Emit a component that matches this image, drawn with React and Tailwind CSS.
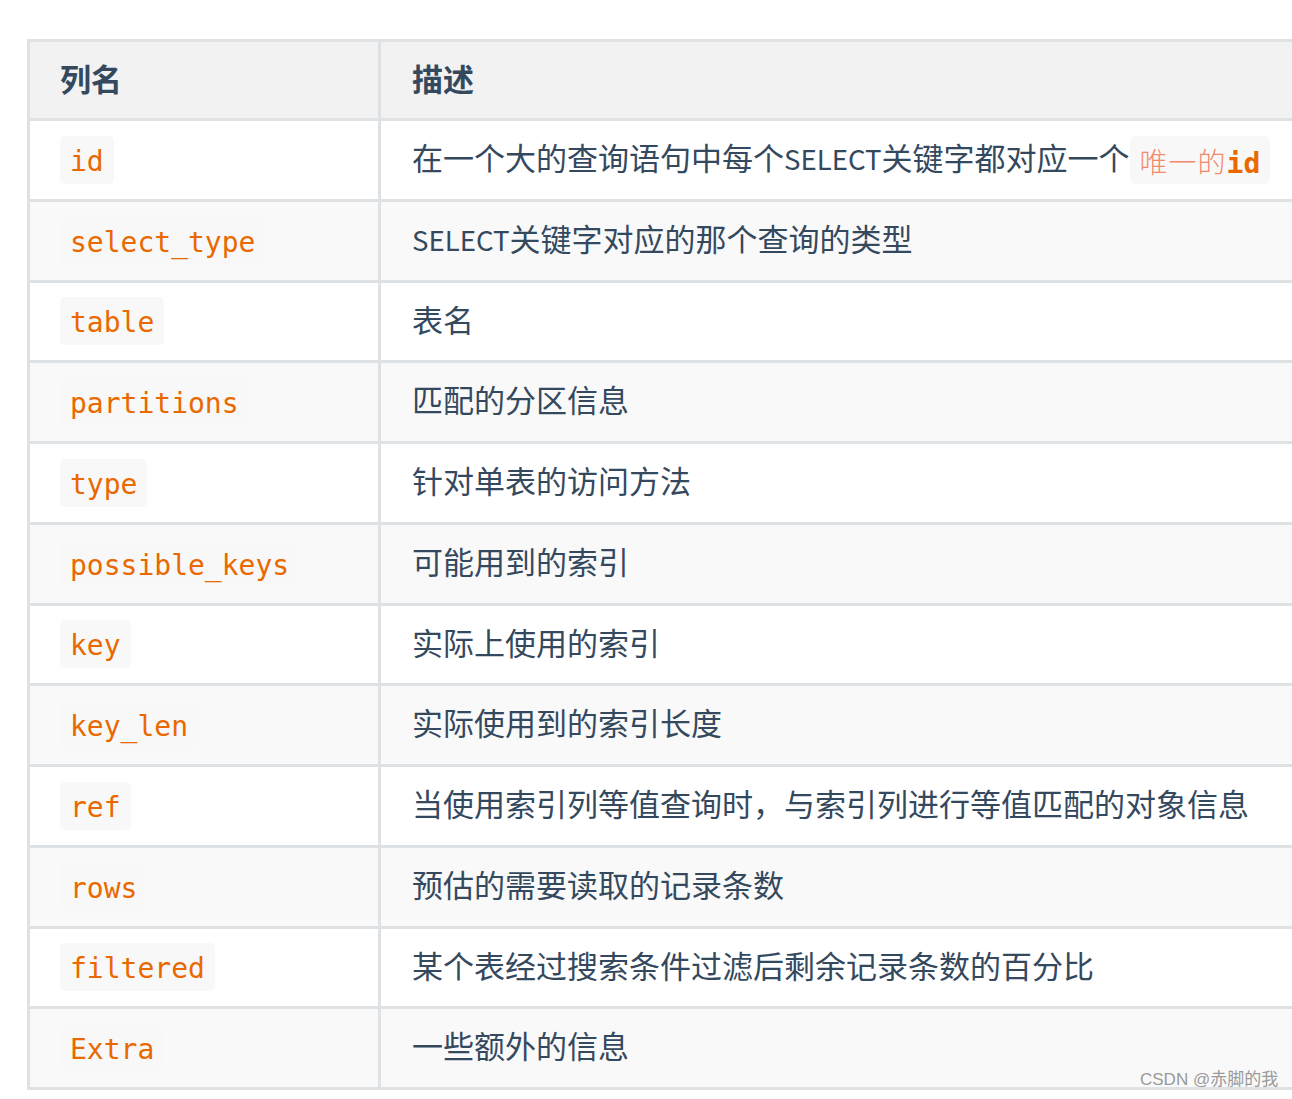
import React from "react";

const rows = [
  ["id", "id"],
  ["select_type", "SELECT关键字对应的那个查询的类型"],
  ["table", "表名"],
  ["partitions", "匹配的分区信息"],
  ["type", "针对单表的访问方法"],
  ["possible_keys", "可能用到的索引"],
  ["key", "实际上使用的索引"],
  ["key_len", "实际使用到的索引长度"],
  ["ref", "当使用索引列等值查询时，与索引列进行等值匹配的对象信息"],
  ["rows", "预估的需要读取的记录条数"],
  ["filtered", "某个表经过搜索条件过滤后剩余记录条数的百分比"],
  ["Extra", "一些额外的信息"],
];

function Code({ children }) {
  return (
    <span className="inline-block bg-[#f8f8f8] rounded-[5px] px-[10px] h-[48px] pt-[3px] leading-[45px] text-[28px] text-[#e96900] [font-family:'DejaVu_Sans_Mono',monospace] whitespace-nowrap">
      {children}
    </span>
  );
}

function Sel() {
  return <span className="text-[27.6px]">SELECT</span>;
}

export default function App() {
  return (
    <div className="relative w-[1292px] h-[1099px] overflow-hidden bg-white [font-family:'Noto_Sans_CJK_SC',sans-serif] text-[#34495e]">
      <div className="pt-[39px] pl-[27px]">
        <div className="w-[1340px] border-l-[3px] border-t-[3px] border-[#dfe2e5]">
          <div className="flex h-[79px] bg-[#f2f2f2] border-b-[3px] border-[#dfe2e5]">
            <div className="w-[351px] shrink-0 border-r-[3px] border-[#dfe2e5] pl-[30px] pb-[4px] flex items-center text-[31px] font-bold">
              列名
            </div>
            <div className="flex-1 pl-[31px] pb-[4px] flex items-center text-[31px] font-bold">描述</div>
          </div>
          {rows.map(([name, desc], i) => (
            <div
              key={name}
              className={`flex h-[80.75px] border-b-[3px] border-[#dfe2e5] ${i % 2 === 1 ? "bg-[#f9f9f9]" : "bg-white"}`}
            >
              <div className="w-[351px] shrink-0 border-r-[3px] border-[#dfe2e5] pl-[30px] flex items-center">
                <Code>{name}</Code>
              </div>
              <div className="flex-1 pl-[31px] pb-[5px] flex items-center text-[31px] whitespace-nowrap">
                {i === 0 ? (
                  <>
                    <span>在一个大的查询语句中每个<Sel />关键字都对应一个</span>
                    <span className="inline-block bg-[#f8f8f8] rounded-[5px] px-[10px] h-[48px] pt-[3px] leading-[45px] text-[28px] mt-[5px] whitespace-nowrap">
                      <span className="text-[#f3886c] font-light tracking-[1px]">唯一的</span>
                      <span className="text-[#e96900] font-bold [font-family:'DejaVu_Sans_Mono',monospace]">id</span>
                    </span>
                  </>
                ) : i === 1 ? (
                  <span><Sel />关键字对应的那个查询的类型</span>
                ) : (
                  <span>{desc}</span>
                )}
              </div>
            </div>
          ))}
        </div>
      </div>
      <div className="absolute left-[1140px] top-[1067px] text-[17px] text-[#9a9a9a] [font-family:'Liberation_Sans','Noto_Sans_CJK_SC',sans-serif] whitespace-nowrap">
        CSDN @赤脚的我
      </div>
    </div>
  );
}
